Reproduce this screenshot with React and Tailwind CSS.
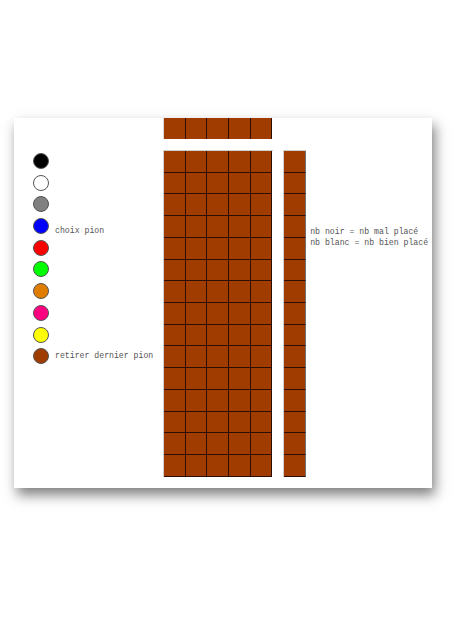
const PIONS = [
  { color: 'bg-[#000000]' },
  { color: 'bg-[#ffffff]' },
  { color: 'bg-[#808080]' },
  { color: 'bg-[#0000ff]', label: 'choix pion', offset: true },
  { color: 'bg-[#ff0000]' },
  { color: 'bg-[#00ff00]' },
  { color: 'bg-[#e07d00]' },
  { color: 'bg-[#ff0080]' },
  { color: 'bg-[#ffff00]' },
  { color: 'bg-[#9f3c00]', label: 'retirer dernier pion' },
]

const ROWS = 15

const Cell = () => (
  <div className="w-[21.7px] h-[21.73px] bg-[#a03c00] border-r border-b border-[#2e0e00]" />
)

const App = () => {
  return (
    <div className="min-h-[619px] bg-white pt-[118px] pl-[14px] font-['Liberation_Mono',monospace] text-[8.2px] text-[#555]">
      <div className="flex w-[418px] h-[370px] bg-white shadow-[3px_7px_12px_rgba(0,0,0,0.5)]">
        {/* choix des pions */}
        <div className="w-[149px] pl-[19px] pt-[32px]">
          {PIONS.map((p, i) => (
            <div key={i} className="flex items-center h-[21.73px]">
              <div className={`w-[16px] h-[16px] rounded-full border border-[#555] ${p.color}`} />
              {p.label && (
                <span className={`ml-[6px] whitespace-nowrap ${p.offset ? 'mt-[11px]' : ''}`}>
                  {p.label}
                </span>
              )}
            </div>
          ))}
        </div>

        {/* plateau */}
        <div className="w-[109.5px]">
          <div className="flex h-[21px] overflow-hidden border-l border-[#d8d8d8]">
            {[0, 1, 2, 3, 4].map((c) => (
              <div key={c} className="w-[21.7px] h-[21px] bg-[#a03c00] border-r border-[#2e0e00]" />
            ))}
          </div>
          <div className="mt-[11px] border-l border-t border-[#d0d0d0]">
            {Array.from({ length: ROWS }).map((_, r) => (
              <div key={r} className="flex">
                {[0, 1, 2, 3, 4].map((c) => <Cell key={c} />)}
              </div>
            ))}
          </div>
        </div>

        {/* resultats */}
        <div className="ml-[10.5px] pt-[32px] w-[22.7px]">
          <div className="border-l border-t border-[#d0d0d0]">
            {Array.from({ length: ROWS }).map((_, r) => (
              <div key={r} className="w-[21.7px] h-[21.73px] bg-[#a03c00] border-b border-r border-b-[#2e0e00] border-r-[#707070]" />
            ))}
          </div>
        </div>

        <div className="ml-[4.5px] pt-[108px] leading-[11px] whitespace-nowrap">
          <div>nb noir = nb mal placé</div>
          <div>nb blanc = nb bien placé</div>
        </div>
      </div>
    </div>
  )
}

export default App
